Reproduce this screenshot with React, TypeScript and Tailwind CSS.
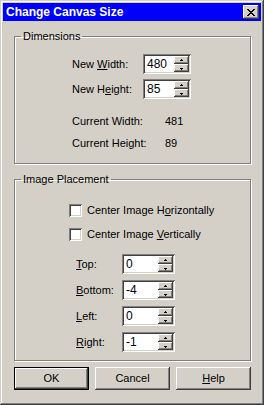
import React from "react";

const raised =
  "shadow-[inset_-1px_-1px_#404040,inset_1px_1px_#ffffff,inset_-2px_-2px_#808080,inset_2px_2px_#d4d0c8]";
const sunken =
  "shadow-[inset_1px_1px_#808080,inset_-1px_-1px_#ffffff,inset_2px_2px_#404040,inset_-2px_-2px_#d4d0c8]";

const Arrow = ({ up }: { up: boolean }) => (
  <svg width="5" height="3" viewBox="0 0 5 3" shapeRendering="crispEdges">
    {up ? (
      <>
        <rect x="2" y="0" width="1" height="1" fill="#000" />
        <rect x="1" y="1" width="3" height="1" fill="#000" />
      </>
    ) : (
      <>
        <rect x="1" y="1" width="3" height="1" fill="#000" />
        <rect x="2" y="2" width="1" height="1" fill="#000" />
      </>
    )}
  </svg>
);

const Spin = ({ value, width }: { value: string; width: string }) => (
  <div className={`${width} h-[20px] flex bg-white p-[2px] ${sunken}`}>
    <div className="flex-1 pl-[2px] text-[12px] leading-[16px] text-black">{value}</div>
    <div className="flex w-[15px] flex-col">
      <div className={`flex h-[8px] items-center justify-center bg-[#d4d0c8] ${raised}`}>
        <Arrow up />
      </div>
      <div className={`flex h-[8px] items-center justify-center bg-[#d4d0c8] ${raised}`}>
        <Arrow up={false} />
      </div>
    </div>
  </div>
);

const Check = ({ children }: { children: React.ReactNode }) => (
  <div className="flex h-[13px] items-center pl-[54px]">
    <div className={`h-[13px] w-[13px] bg-white ${sunken}`}></div>
    <span className="ml-[5px] leading-[13px]">{children}</span>
  </div>
);

const Offset = ({ label, value }: { label: React.ReactNode; value: string }) => (
  <div className="flex h-[20px] items-center pl-[61px]">
    <span className="w-[46px] leading-[13px]">{label}</span>
    <Spin value={value} width="w-[53px]" />
  </div>
);

const CloseGlyph = () => (
  <svg width="8" height="7" viewBox="0 0 8 7" shapeRendering="crispEdges">
    <rect x="0" y="0" width="2" height="1" />
    <rect x="6" y="0" width="2" height="1" />
    <rect x="1" y="1" width="2" height="1" />
    <rect x="5" y="1" width="2" height="1" />
    <rect x="2" y="2" width="4" height="1" />
    <rect x="3" y="3" width="2" height="1" />
    <rect x="2" y="4" width="4" height="1" />
    <rect x="1" y="5" width="2" height="1" />
    <rect x="5" y="5" width="2" height="1" />
    <rect x="0" y="6" width="2" height="1" />
    <rect x="6" y="6" width="2" height="1" />
  </svg>
);

const group =
  "border border-[#808080] shadow-[inset_1px_1px_#ffffff,1px_1px_#ffffff]";

export default function App() {
  return (
    <div
      className={`flex h-[405px] w-[264px] flex-col bg-[#d4d0c8] p-[3px] text-[11px] text-black font-['Liberation_Sans',Arial,sans-serif] ${"shadow-[inset_-1px_-1px_#404040,inset_1px_1px_#d4d0c8,inset_-2px_-2px_#808080,inset_2px_2px_#ffffff]"}`}
    >
      {/* title bar */}
      <div className="flex h-[18px] items-center justify-between bg-[#0000ff] pl-[3px] pr-[2px]">
        <span className="text-[12px] font-bold leading-[14px] text-white">Change Canvas Size</span>
        <div className={`flex h-[14px] w-[16px] items-center justify-center bg-[#d4d0c8] ${raised}`}>
          <CloseGlyph />
        </div>
      </div>

      <div className="flex flex-col pl-[11px] pr-[10px]">
        <fieldset className={`mt-[9px] pb-[13px] ${group}`}>
          <legend className="ml-[6px] px-[2px] leading-[13px]">Dimensions</legend>
          <div className="mt-[11px] flex flex-col gap-[5px]">
            <div className="flex h-[20px] items-center pl-[57px]">
              <span className="w-[71px] leading-[13px]">
                New <u>W</u>idth:
              </span>
              <Spin value="480" width="w-[48px]" />
            </div>
            <div className="flex h-[20px] items-center pl-[57px]">
              <span className="w-[71px] leading-[13px]">
                New H<u>e</u>ight:
              </span>
              <Spin value="85" width="w-[48px]" />
            </div>
          </div>
          <div className="mt-[16px] flex flex-col gap-[9px] pl-[57px] leading-[13px]">
            <div className="flex">
              <span className="w-[93px]">Current Width:</span>
              <span>481</span>
            </div>
            <div className="flex">
              <span className="w-[93px]">Current Height:</span>
              <span>89</span>
            </div>
          </div>
        </fieldset>

        <fieldset className={`mt-[9px] pb-[8px] ${group}`}>
          <legend className="ml-[6px] px-[2px] leading-[13px]">Image Placement</legend>
          <div className="mt-[18px] flex flex-col gap-[11px]">
            <Check>
              Center Image H<u>o</u>rizontally
            </Check>
            <Check>
              Center Image <u>V</u>ertically
            </Check>
          </div>
          <div className="mt-[13px] flex flex-col gap-[6px]">
            <Offset label={<><u>T</u>op:</>} value="0" />
            <Offset label={<><u>B</u>ottom:</>} value="-4" />
            <Offset label={<><u>L</u>eft:</>} value="0" />
            <Offset label={<><u>R</u>ight:</>} value="-1" />
          </div>
        </fieldset>

        <div className="mt-[6px] flex gap-[6px]">
          <button
            className={`flex h-[23px] w-[75px] items-center justify-center border border-black bg-[#d4d0c8] ${raised}`}
          >
            OK
          </button>
          <button className={`flex h-[23px] w-[75px] items-center justify-center bg-[#d4d0c8] ${raised}`}>
            Cancel
          </button>
          <button className={`flex h-[23px] w-[75px] items-center justify-center bg-[#d4d0c8] ${raised}`}>
            <span>
              <u>H</u>elp
            </span>
          </button>
        </div>
      </div>
    </div>
  );
}
